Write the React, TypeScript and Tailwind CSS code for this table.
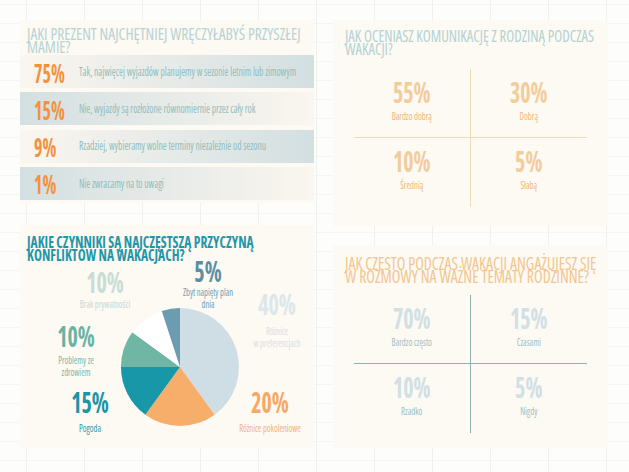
import type { ReactNode } from 'react'

const narrow = "font-['Open_Sans','Roboto',sans-serif] [font-stretch:75%]"

const rows = [
  {
    pct: '75%',
    text: 'Tak, najwięcej wyjazdów planujemy w sezonie letnim lub zimowym',
    bg: 'bg-linear-to-r from-[#fbf6ef] to-[#d3dfe1]',
  },
  {
    pct: '15%',
    text: 'Nie, wyjazdy są rozłożone równomiernie przez cały rok',
    bg: 'bg-linear-to-r from-[#d3dfe1] to-[#fbf6ef]',
  },
  {
    pct: '9%',
    text: 'Rzadziej, wybieramy wolne terminy niezależnie od sezonu',
    bg: 'bg-linear-to-r from-[#fbf6ef] to-[#d3dfe1]',
  },
  {
    pct: '1%',
    text: 'Nie zwracamy na to uwagi',
    bg: 'bg-linear-to-r from-[#d3dfe1] to-[#fbf6ef]',
  },
]

const cellBorders = ['border-r border-b', 'border-b', 'border-r', '']

type QuadItem = { pct: string; label: string }

function Title({ children, className }: { children: ReactNode; className: string }) {
  return (
    <div className="h-[26px]">
      <div className={`origin-top uppercase whitespace-nowrap ${className}`}>{children}</div>
    </div>
  )
}

function Num({ pct, className }: { pct: string; className: string }) {
  return (
    <div className="h-[20px]">
      <div className={`origin-top text-[22px] font-bold leading-[14.3px] [transform:scaleY(1.27)] ${className}`}>
        {pct}
      </div>
    </div>
  )
}

function Quadrants({
  items,
  lineClass,
  numClass,
  labelClass,
}: {
  items: QuadItem[]
  lineClass: string
  numClass: string
  labelClass: string
}) {
  return (
    <div className="mx-[21px] grid h-[138px] grid-cols-2 grid-rows-2">
      {items.map((it, i) => (
        <div key={it.label} className={`flex flex-col items-center pt-[14px] ${cellBorders[i]} ${lineClass}`}>
          <Num pct={it.pct} className={numClass} />
          <div className={`mt-[8px] origin-top text-[8.7px] leading-[9px] [transform:scaleY(1.3)] ${labelClass}`}>
            {it.label}
          </div>
        </div>
      ))}
    </div>
  )
}

function ChartLabel({
  pos,
  pct,
  children,
  numClass,
  labelClass,
}: {
  pos: string
  pct: string
  children: ReactNode
  numClass: string
  labelClass: string
}) {
  return (
    <div className={`absolute flex -translate-x-1/2 flex-col items-center text-center ${pos}`}>
      <Num pct={pct} className={numClass} />
      <div className={`origin-top whitespace-nowrap text-[8.5px] leading-[8.5px] [transform:scaleY(1.3)] ${labelClass}`}>
        {children}
      </div>
    </div>
  )
}

function Pie() {
  return (
    <svg className="absolute left-[101px] top-[83px] h-[118px] w-[118px]" viewBox="0 0 118 118">
      <path d="M59 59 L59 0 A59 59 0 0 1 93.68 106.73 Z" fill="#cfdee5" />
      <path d="M59 59 L93.68 106.73 A59 59 0 0 1 24.32 106.73 Z" fill="#f7ae6b" />
      <path d="M59 59 L24.32 106.73 A59 59 0 0 1 0 59 Z" fill="#1897a9" />
      <path d="M59 59 L0 59 A59 59 0 0 1 11.27 24.32 Z" fill="#6fb6a4" />
      <path d="M59 59 L11.27 24.32 A59 59 0 0 1 40.77 2.89 Z" fill="#ffffff" />
      <path d="M59 59 L40.77 2.89 A59 59 0 0 1 59 0 Z" fill="#6b9cb0" />
    </svg>
  )
}

export default function App() {
  return (
    <div
      className={`${narrow} h-[472px] w-[629px] overflow-hidden bg-[#fdfdfb] bg-[linear-gradient(to_right,#f0f0ec_1px,transparent_1px),linear-gradient(to_bottom,#f5f5f2_1px,transparent_1px)] bg-[size:58px_19px] bg-[position:26px_4px]`}
    >
      <div className="flex gap-[19px] pl-[20px] pt-[20px]">
        <div className="flex w-[294px] flex-col gap-[22px]">
          {/* gift question */}
          <section className="h-[183px] bg-[#fdf9f3] pt-[8px]">
            <div className="pl-[7px]">
              <Title className="text-[15.5px] leading-[11.8px] text-[#b6d4d4] [transform:scaleY(1.1)]">
                Jaki prezent najchętniej wręczyłabyś przyszłej
                <br />
                mamie?
              </Title>
            </div>
            <div className="mt-[1px] flex flex-col gap-[4.3px]">
              {rows.map((r) => (
                <div key={r.pct} className={`flex h-[33px] items-center pl-[14px] ${r.bg}`}>
                  <span className="inline-block w-[45px] text-[18px] font-bold leading-none text-[#f3923e] [transform:scaleY(1.5)]">
                    {r.pct}
                  </span>
                  <span className="inline-block text-[9.5px] leading-none text-[#8fbdbd] [transform:scaleY(1.25)]">
                    {r.text}
                  </span>
                </div>
              ))}
            </div>
          </section>

          {/* conflicts pie */}
          <section className="relative h-[223px] bg-[#fdf9f3] pt-[11px]">
            <div className="pl-[7px]">
              <Title className="text-[13.5px] font-bold leading-[11.1px] text-[#1e97a8] [transform:scaleY(1.17)]">
                Jakie czynniki są najczęstszą przyczyną
                <br />
                konfliktów na wakacjach?
              </Title>
            </div>
            <Pie />
            <ChartLabel pos="left-[188px] top-[37px] gap-[5px]" pct="5%" numClass="text-[#5a8ea4]" labelClass="text-[#6d9fb2]">
              Zbyt napięty plan
              <br />
              dnia
            </ChartLabel>
            <ChartLabel pos="left-[85px] top-[48px] gap-[6px]" pct="10%" numClass="text-[#c7ddd5]" labelClass="text-[#c4dad2]">
              Brak prywatności
            </ChartLabel>
            <ChartLabel pos="left-[257px] top-[70px] gap-[11px]" pct="40%" numClass="text-[#dbe7ea]" labelClass="text-[#d3e1e4]">
              Różnice
              <br />w preferencjach
            </ChartLabel>
            <ChartLabel pos="left-[56px] top-[102px] gap-[8px]" pct="10%" numClass="text-[#6ab3a3]" labelClass="text-[#78b8aa]">
              Problemy ze
              <br />
              zdrowiem
            </ChartLabel>
            <ChartLabel pos="left-[70px] top-[168px] gap-[10px]" pct="15%" numClass="text-[#1a94a7]" labelClass="text-[#2b9bab]">
              Pogoda
            </ChartLabel>
            <ChartLabel pos="left-[250px] top-[168px] gap-[10px]" pct="20%" numClass="text-[#f6a865]" labelClass="text-[#f3b27a]">
              Różnice pokoleniowe
            </ChartLabel>
          </section>
        </div>

        <div className="flex w-[275px] flex-col gap-[19px]">
          {/* communication */}
          <section className="h-[206px] bg-[#fdf9f3] pt-[10px]">
            <div className="pl-[12px]">
              <Title className="text-[14.7px] leading-[11.8px] text-[#b3d3d3] [transform:scaleY(1.1)]">
                Jak oceniasz komunikację z rodziną podczas
                <br />
                wakacji?
              </Title>
            </div>
            <div className="mt-[13px]">
              <Quadrants
                items={[
                  { pct: '55%', label: 'Bardzo dobrą' },
                  { pct: '30%', label: 'Dobrą' },
                  { pct: '10%', label: 'Średnią' },
                  { pct: '5%', label: 'Słabą' },
                ]}
                lineClass="border-[#efd9bb]"
                numClass="text-[#f1cc9c]"
                labelClass="text-[#ebb87c]"
              />
            </div>
          </section>

          {/* family talks */}
          <section className="h-[203px] bg-[#fdf9f3] pt-[13px]">
            <div className="pl-[12px]">
              <Title className="text-[15.8px] leading-[11.5px] text-[#f2c68f] [transform:scaleY(1.1)]">
                Jak często podczas wakacji angażujesz się
                <br />w rozmowy na ważne tematy rodzinne?
              </Title>
            </div>
            <div className="mt-[11px]">
              <Quadrants
                items={[
                  { pct: '70%', label: 'Bardzo często' },
                  { pct: '15%', label: 'Czasami' },
                  { pct: '10%', label: 'Rzadko' },
                  { pct: '5%', label: 'Nigdy' },
                ]}
                lineClass="border-[#8fb0b5]"
                numClass="text-[#d0e0e4]"
                labelClass="text-[#9fbec3]"
              />
            </div>
          </section>
        </div>
      </div>
    </div>
  )
}
